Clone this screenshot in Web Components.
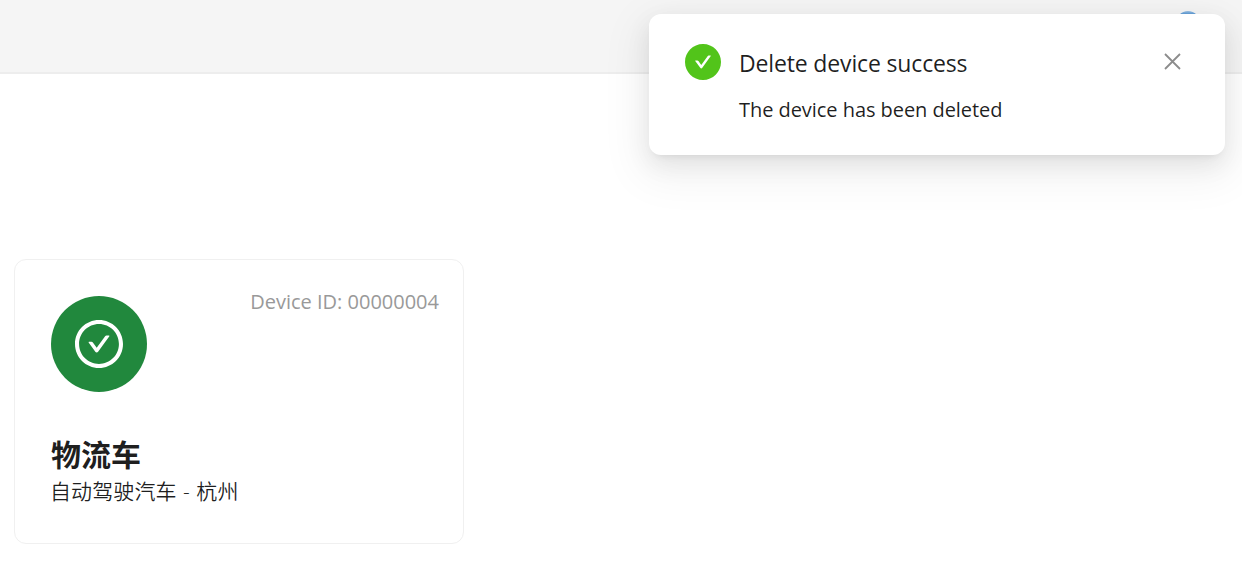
<!DOCTYPE html>
<html lang="en">
<head>
<meta charset="utf-8">
<title>Devices</title>
<style>
html,body{margin:0;height:100%;overflow:hidden}
body{background:#fff;color:rgba(0,0,0,.88);font-family:"Open Sans","Noto Sans","Noto Sans CJK SC",sans-serif}
</style>
</head>
<body>
<device-page>
  <device-card device-id="00000004">
    <span slot="name">物流车</span>
    <span slot="description">自动驾驶汽车 - 杭州</span>
  </device-card>
  <success-notice slot="notice">
    <span slot="title">Delete device success</span>
    <span slot="message">The device has been deleted</span>
  </success-notice>
</device-page>
<script>
class DevicePage extends HTMLElement {
  constructor() {
    super();
    this.attachShadow({mode: 'open'}).innerHTML = `
      <style>
        :host{display:block;position:relative;height:561px;overflow:hidden}
        header{box-sizing:border-box;height:74px;background:#f5f5f5;border-bottom:2px solid #ededed;display:flex;justify-content:flex-end;padding:11px 42px 0 0}
        .avatar{width:24px;height:24px;border-radius:50%;background:linear-gradient(#9cc2e6,#5c9ad6 3px)}
        main{padding:185px 14px 0}
        .notice{position:absolute;top:14px;right:17px}
      </style>
      <header><div class="avatar"></div></header>
      <main><slot></slot></main>
      <div class="notice"><slot name="notice"></slot></div>`;
  }
}
class DeviceCard extends HTMLElement {
  constructor() {
    super();
    this.attachShadow({mode: 'open'}).innerHTML = `
      <style>
        :host{display:block;box-sizing:border-box;width:450px;height:285px;border:1px solid #f0f0f0;border-radius:12px;padding:36px 24px 0 36px;background:#fff}
        .top{display:flex;justify-content:space-between;height:96px}
        .disc{width:96px;height:96px;border-radius:50%;background:#21883d;display:flex;align-items:center;justify-content:center}
        svg{width:48px;height:48px;fill:#fff}
        .id{font-size:20px;line-height:30px;margin-top:-9px;color:#999;white-space:nowrap}
        .name{font:700 30px/36px "Noto Sans CJK SC",sans-serif;margin-top:43px}
        .desc{font:21px/33px "Open Sans","Noto Sans CJK SC",sans-serif;font-weight:350;margin-top:4px;margin-left:-1px;letter-spacing:.1px;word-spacing:.9px}
      </style>
      <div class="top">
        <div class="disc"><svg viewBox="64 64 896 896"><path d="M699 353h-46.900c-10.200 0-19.900 4.900-25.900 13.300L469 584.300l-71.200-98.800c-6-8.300-15.600-13.300-25.900-13.300H325c-6.500 0-10.300 7.400-6.500 12.700l124.600 172.800a31.800 31.800 0 0051.700 0l210.600-292c3.900-5.300.1-12.700-6.400-12.700z"/><path d="M512 64C264.600 64 64 264.600 64 512s200.600 448 448 448 448-200.600 448-448S759.400 64 512 64zm0 820c-205.400 0-372-166.600-372-372s166.600-372 372-372 372 166.600 372 372-166.600 372-372 372z"/></svg></div>
        <div class="id"></div>
      </div>
      <div class="name"><slot name="name"></slot></div>
      <div class="desc"><slot name="description"></slot></div>`;
  }
  connectedCallback() {
    this.shadowRoot.querySelector('.id').textContent = 'Device ID: ' + this.getAttribute('device-id');
  }
}
class SuccessNotice extends HTMLElement {
  constructor() {
    super();
    this.attachShadow({mode: 'open'}).innerHTML = `
      <style>
        :host{display:flex;box-sizing:border-box;width:576px;height:141px;padding:30px 44px 0 36px;border-radius:12px;background:#fff;box-shadow:0 9px 24px rgba(0,0,0,.08),0 4.5px 9px -6px rgba(0,0,0,.12),0 13.5px 42px 12px rgba(0,0,0,.05)}
        .ok{width:36px;height:36px;fill:#52c41a;flex:none}
        .text{flex:1;margin-left:18px;white-space:nowrap}
        .title{font-size:23px;line-height:36px;margin-top:1px;letter-spacing:-.15px}
        .message{font-size:20px;line-height:33px;margin-top:12px;letter-spacing:-.05px}
        .close{width:17px;height:17px;margin-top:9px;flex:none;stroke:#8c8c8c;stroke-width:1.8;fill:none}
      </style>
      <svg class="ok" viewBox="64 64 896 896"><path d="M512 64C264.600 64 64 264.600 64 512s200.600 448 448 448 448-200.600 448-448S759.400 64 512 64zm193.500 301.700l-210.600 292a31.800 31.800 0 01-51.700 0L318.500 484.900c-3.800-5.300 0-12.700 6.500-12.700h46.900c10.200 0 19.900 4.900 25.900 13.300l71.200 98.800 157.200-218c6-8.300 15.600-13.300 25.900-13.300H699c6.500 0 10.300 7.400 6.500 12.700z"/></svg>
      <div class="text"><div class="title"><slot name="title"></slot></div><div class="message"><slot name="message"></slot></div></div>
      <svg class="close" viewBox="0 0 17 17"><path d="M1 1L16 16M16 1L1 16"/></svg>`;
  }
}
customElements.define('device-page', DevicePage);
customElements.define('device-card', DeviceCard);
customElements.define('success-notice', SuccessNotice);
</script>
</body>
</html>
